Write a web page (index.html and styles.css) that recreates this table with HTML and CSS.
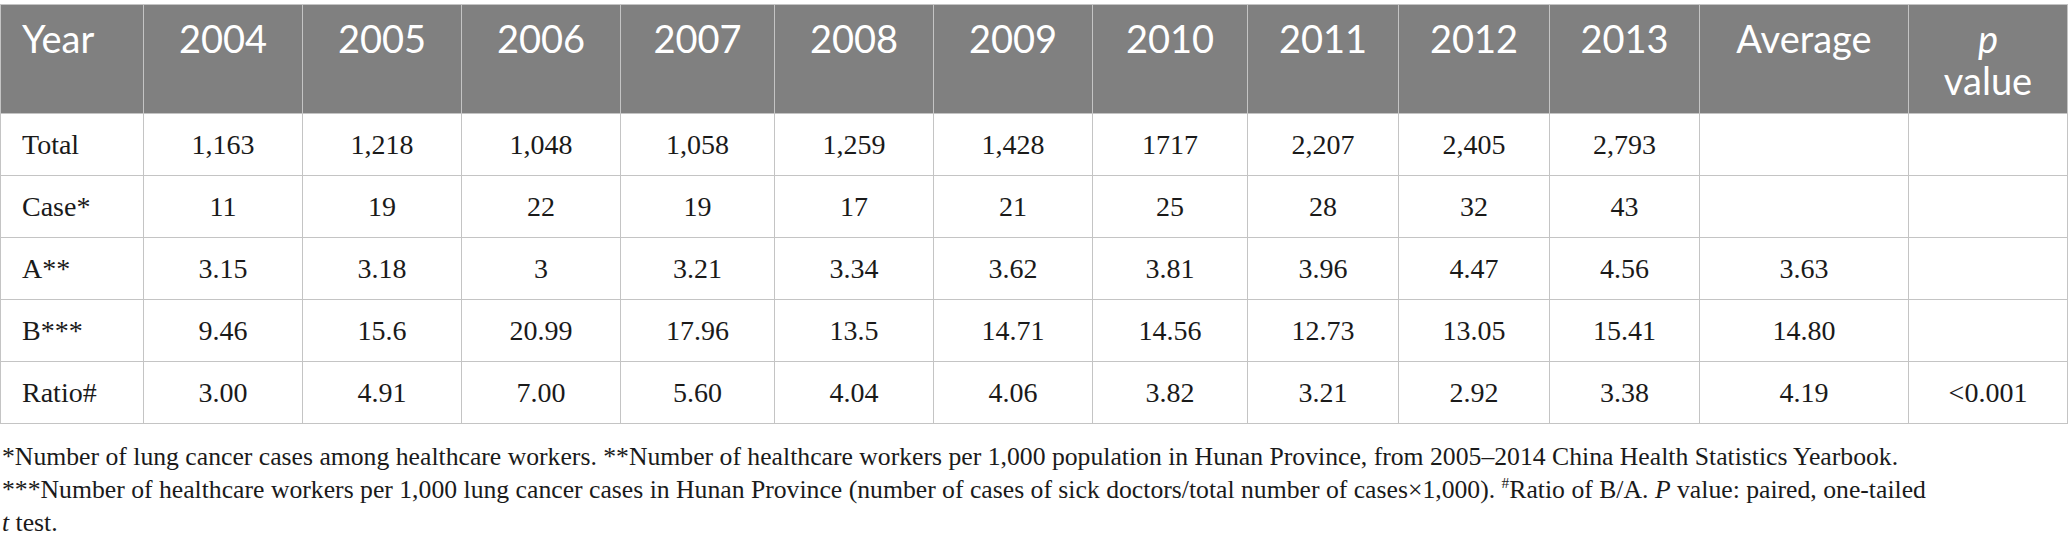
FILE: index.html
```html
<!DOCTYPE html>
<html lang="en">
<head>
    <meta charset="UTF-8">
    <meta name="viewport" content="width=device-width, initial-scale=1.0">
    <title>Lung cancer cases among healthcare workers</title>
    <link rel="stylesheet" href="styles.css">
</head>
<body>
    <div class="tabla-wrap">
        <table class="datos">
            <colgroup>
                <col class="c-year">
                <col class="c-159">
                <col class="c-159">
                <col class="c-159">
                <col class="c-154">
                <col class="c-159">
                <col class="c-159">
                <col class="c-155">
                <col class="c-151">
                <col class="c-151">
                <col class="c-150">
                <col class="c-avg">
                <col class="c-p">
            </colgroup>
            <thead>
                <tr>
                    <th class="primera">Year</th>
                    <th>2004</th>
                    <th>2005</th>
                    <th>2006</th>
                    <th>2007</th>
                    <th>2008</th>
                    <th>2009</th>
                    <th>2010</th>
                    <th>2011</th>
                    <th>2012</th>
                    <th>2013</th>
                    <th>Average</th>
                    <th><i>p</i><br>value</th>
                </tr>
            </thead>
            <tbody>
                <tr>
                    <td class="primera">Total</td>
                    <td>1,163</td>
                    <td>1,218</td>
                    <td>1,048</td>
                    <td>1,058</td>
                    <td>1,259</td>
                    <td>1,428</td>
                    <td>1717</td>
                    <td>2,207</td>
                    <td>2,405</td>
                    <td>2,793</td>
                    <td></td>
                    <td></td>
                </tr>
                <tr>
                    <td class="primera">Case*</td>
                    <td>11</td>
                    <td>19</td>
                    <td>22</td>
                    <td>19</td>
                    <td>17</td>
                    <td>21</td>
                    <td>25</td>
                    <td>28</td>
                    <td>32</td>
                    <td>43</td>
                    <td></td>
                    <td></td>
                </tr>
                <tr>
                    <td class="primera">A**</td>
                    <td>3.15</td>
                    <td>3.18</td>
                    <td>3</td>
                    <td>3.21</td>
                    <td>3.34</td>
                    <td>3.62</td>
                    <td>3.81</td>
                    <td>3.96</td>
                    <td>4.47</td>
                    <td>4.56</td>
                    <td>3.63</td>
                    <td></td>
                </tr>
                <tr>
                    <td class="primera">B***</td>
                    <td>9.46</td>
                    <td>15.6</td>
                    <td>20.99</td>
                    <td>17.96</td>
                    <td>13.5</td>
                    <td>14.71</td>
                    <td>14.56</td>
                    <td>12.73</td>
                    <td>13.05</td>
                    <td>15.41</td>
                    <td>14.80</td>
                    <td></td>
                </tr>
                <tr>
                    <td class="primera">Ratio#</td>
                    <td>3.00</td>
                    <td>4.91</td>
                    <td>7.00</td>
                    <td>5.60</td>
                    <td>4.04</td>
                    <td>4.06</td>
                    <td>3.82</td>
                    <td>3.21</td>
                    <td>2.92</td>
                    <td>3.38</td>
                    <td>4.19</td>
                    <td>&lt;0.001</td>
                </tr>
            </tbody>
        </table>

        <p class="notas">*Number of lung cancer cases among healthcare workers. **Number of healthcare workers per 1,000 population in Hunan Province, from 2005–2014 China Health Statistics Yearbook. ***Number of healthcare workers per 1,000 lung cancer cases in Hunan Province (number of cases of sick doctors/total number of cases×1,000). <sup>#</sup>Ratio of B/A. <i>P</i> value: paired, <span class="nowrap">one-tailed</span><br><i>t</i> test.</p>
    </div>
</body>
</html>
```

FILE: styles.css
```css
body {
    margin: 0;
    padding: 4px 0 0;
    background-color: #ffffff;
    color: #1a1a1a;
    font-family: "Liberation Serif", "Times New Roman", serif;
}

.tabla-wrap {
    width: 2068px;
}

/* Tabla */
.datos {
    width: 2068px;
    table-layout: fixed;
    border-collapse: collapse;
}

.c-year { width: 143px; }
.c-159 { width: 159px; }
.c-154 { width: 154px; }
.c-155 { width: 155px; }
.c-151 { width: 151px; }
.c-150 { width: 150px; }
.c-avg { width: 209px; }
.c-p { width: 159px; }

.datos th, .datos td {
    border: 1px solid #c4c4c4;
    text-align: center;
}

.datos thead th {
    background-color: #808080;
    color: #ffffff;
    font-family: Lato, "Open Sans", sans-serif;
    font-weight: normal;
    font-size: 38px;
    line-height: 42px;
    height: 84px;
    padding: 12px 8px;
    vertical-align: top;
}

.datos tbody td {
    font-size: 28px;
    line-height: 34px;
    height: 61px;
    padding: 0 8px;
    vertical-align: middle;
}

.datos .primera {
    text-align: left;
    padding-left: 21px;
}

/* Notas */
.notas {
    margin: 16px 0 0 2px;
    max-width: 1960px;
    font-size: 25.7px;
    line-height: 33px;
}

.notas sup {
    font-size: 0.6em;
    line-height: 0;
}

.nowrap {
    white-space: nowrap;
}
```
